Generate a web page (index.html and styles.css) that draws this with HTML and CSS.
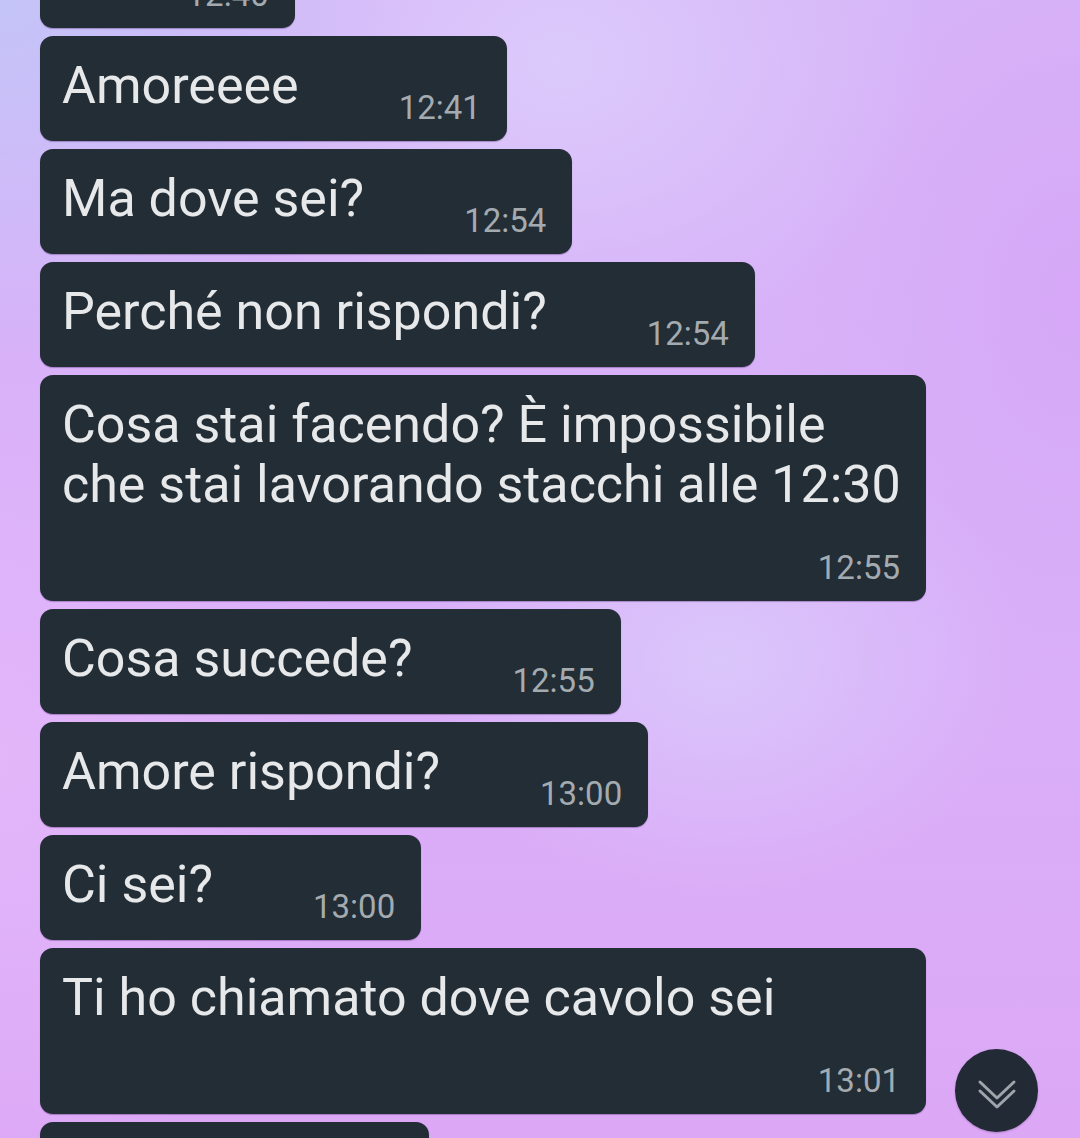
FILE: index.html
```html
<!DOCTYPE html>
<html lang="it">
<head>
    <meta charset="UTF-8">
    <meta name="viewport" content="width=device-width, initial-scale=1.0">
    <title>Chat</title>
    <link rel="stylesheet" href="styles.css">
</head>
<body>
    <div class="chat">
        <div class="messages">
            <div class="bubble">
                <span class="text">?</span>
                <span class="time">12:40</span>
            </div>
            <div class="bubble">
                <span class="text">Amoreeee</span>
                <span class="time">12:41</span>
            </div>
            <div class="bubble">
                <span class="text">Ma dove sei?</span>
                <span class="time">12:54</span>
            </div>
            <div class="bubble">
                <span class="text">Perché non rispondi?</span>
                <span class="time">12:54</span>
            </div>
            <div class="bubble">
                <span class="text">Cosa stai facendo? È impossibile che stai lavorando stacchi alle 12:30</span>
                <span class="time">12:55</span>
            </div>
            <div class="bubble">
                <span class="text">Cosa succede?</span>
                <span class="time">12:55</span>
            </div>
            <div class="bubble">
                <span class="text">Amore rispondi?</span>
                <span class="time">13:00</span>
            </div>
            <div class="bubble">
                <span class="text">Ci sei?</span>
                <span class="time">13:00</span>
            </div>
            <div class="bubble">
                <span class="text">Ti ho chiamato dove cavolo sei</span>
                <span class="time">13:01</span>
            </div>
            <div class="bubble">
                <span class="text">Allora?</span>
                <span class="time">13:02</span>
            </div>
        </div>

        <button class="scroll-down" aria-label="Scroll down">
            <svg width="40" height="32" viewBox="0 0 40 32">
                <polyline points="3,4 20,20 37,4" />
                <polyline points="3,13 20,29 37,13" />
            </svg>
        </button>
    </div>
</body>
</html>
```

FILE: styles.css
```css
* {
    margin: 0;
    padding: 0;
    box-sizing: border-box;
}

html, body {
    width: 1080px;
    height: 1138px;
    overflow: hidden;
}

body {
    font-family: Roboto, "Noto Sans", sans-serif;
    background:
        radial-gradient(ellipse 420px 360px at 0px 0px, #c4c4f8 0%, rgba(196, 196, 248, 0) 100%),
        radial-gradient(ellipse 380px 300px at 560px 60px, #dccafb 0%, rgba(220, 202, 251, 0) 100%),
        radial-gradient(ellipse 360px 420px at 0px 760px, #e3b6fa 0%, rgba(227, 182, 250, 0) 100%),
        radial-gradient(ellipse 300px 240px at 720px 660px, #dac6fb 0%, rgba(218, 198, 251, 0) 100%),
        radial-gradient(ellipse 300px 400px at 1080px 300px, #d6a8f7 0%, rgba(214, 168, 247, 0) 100%),
        linear-gradient(180deg, #d6b4f8 0%, #d9b0f9 50%, #dca8f6 100%);
    color: #e6e8ea;
}

.chat {
    position: relative;
    height: 100%;
    overflow: hidden;
}

.messages {
    display: flex;
    flex-direction: column;
    align-items: flex-start;
    gap: 8px;
    margin-top: -77px;
    padding-left: 40px;
}

.bubble {
    display: flex;
    flex-wrap: wrap;
    align-items: flex-end;
    max-width: 886px;
    min-height: 105px;
    padding: 20px 20px 17px 22px;
    background: #222d35;
    border-radius: 13px;
    box-shadow: 0 1px 1px rgba(70, 30, 100, 0.35);
}

.text {
    font-size: 52px;
    line-height: 60px;
    margin-bottom: 8px;
    color: #e6e8ea;
}

.time {
    margin-left: auto;
    margin-top: 29px;
    margin-right: 6px;
    padding-left: 100px;
    font-size: 33px;
    line-height: 32px;
    color: #a4abb0;
}

.scroll-down {
    position: absolute;
    left: 955px;
    top: 1049px;
    width: 83px;
    height: 83px;
    border: none;
    border-radius: 50%;
    background: #222b35;
    display: flex;
    align-items: center;
    justify-content: center;
    box-shadow: 0 1px 2px rgba(70, 30, 100, 0.3);
}

.scroll-down svg {
    margin-top: 6px;
}

.scroll-down polyline {
    fill: none;
    stroke: #9ea6ab;
    stroke-width: 3;
    stroke-linecap: round;
    stroke-linejoin: round;
}
```
